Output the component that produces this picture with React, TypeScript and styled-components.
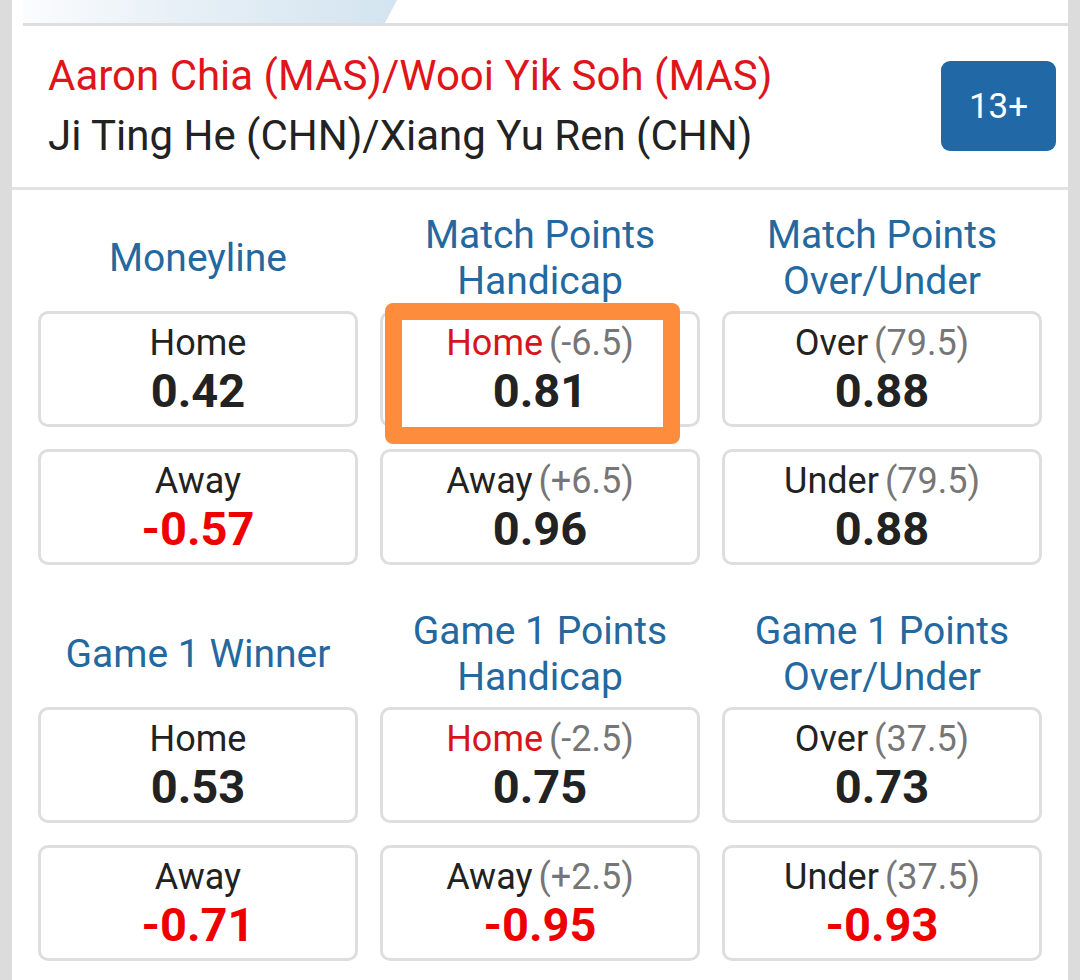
import styled, { createGlobalStyle } from "styled-components";

const GlobalStyle = createGlobalStyle`
  html, body {
    margin: 0;
    padding: 0;
    background: #dcdcdc;
  }
  body {
    font-family: Roboto, "Noto Sans", Arial, sans-serif;
    -webkit-font-smoothing: antialiased;
  }
`;

type Line = {
    label: string;
    line?: string;
    odds: string;
    hot?: boolean;
    marked?: boolean;
};

type Market = {
    title: string[];
    lines: Line[];
};

const sections: Market[][] = [
    [
        {
            title: ["Moneyline"],
            lines: [
                { label: "Home", odds: "0.42" },
                { label: "Away", odds: "-0.57" },
            ],
        },
        {
            title: ["Match Points", "Handicap"],
            lines: [
                { label: "Home", line: "(-6.5)", odds: "0.81", hot: true, marked: true },
                { label: "Away", line: "(+6.5)", odds: "0.96" },
            ],
        },
        {
            title: ["Match Points", "Over/Under"],
            lines: [
                { label: "Over", line: "(79.5)", odds: "0.88" },
                { label: "Under", line: "(79.5)", odds: "0.88" },
            ],
        },
    ],
    [
        {
            title: ["Game 1 Winner"],
            lines: [
                { label: "Home", odds: "0.53" },
                { label: "Away", odds: "-0.71" },
            ],
        },
        {
            title: ["Game 1 Points", "Handicap"],
            lines: [
                { label: "Home", line: "(-2.5)", odds: "0.75", hot: true },
                { label: "Away", line: "(+2.5)", odds: "-0.95" },
            ],
        },
        {
            title: ["Game 1 Points", "Over/Under"],
            lines: [
                { label: "Over", line: "(37.5)", odds: "0.73" },
                { label: "Under", line: "(37.5)", odds: "-0.93" },
            ],
        },
    ],
];

function OddsCard({ item }: { item: Line }) {
    const negative = item.odds.startsWith("-");
    return (
        <Card>
            {item.marked && <Marker />}
            <CardText>
                <Label $hot={item.hot}>
                    {item.label}
                    {item.line && <LineValue>{item.line}</LineValue>}
                </Label>
                <Odds $negative={negative}>{item.odds}</Odds>
            </CardText>
        </Card>
    );
}

function App() {
    return (
        <>
            <GlobalStyle />
            <Page>
                <Strip />
                <Main>
                    <TopBar>
                        <Banner />
                    </TopBar>
                    <MatchHeader>
                        <Teams>
                            <HomeTeam>Aaron Chia (MAS)/Wooi Yik Soh (MAS)</HomeTeam>
                            <AwayTeam>Ji Ting He (CHN)/Xiang Yu Ren (CHN)</AwayTeam>
                        </Teams>
                        <MoreButton>13+</MoreButton>
                    </MatchHeader>
                    {sections.map((markets, i) => (
                        <Section key={i}>
                            {markets.map((m) => (
                                <Column key={m.title.join(" ")}>
                                    <Title>
                                        {m.title.map((t) => (
                                            <span key={t}>{t}</span>
                                        ))}
                                    </Title>
                                    {m.lines.map((l) => (
                                        <OddsCard key={l.label} item={l} />
                                    ))}
                                </Column>
                            ))}
                        </Section>
                    ))}
                </Main>
                <Strip />
            </Page>
        </>
    );
}

const Page = styled.div`
display: flex;
min-height: 100vh;
background: #dcdcdc;
`;

const Strip = styled.div`
width: 12px;
flex: none;
background: #dcdcdc;
`;

const Main = styled.div`
flex: 1;
background: #ffffff;
`;

const TopBar = styled.div`
margin-left: 11px;
height: 23px;
border-bottom: 3px solid #dedede;
`;

const Banner = styled.div`
width: 374px;
height: 100%;
background: linear-gradient(90deg, #fbfcfe 0%, #e6eff6 45%, #d3e4f0 100%);
clip-path: polygon(0 0, 100% 0, calc(100% - 12px) 100%, 0 100%);
`;

const MatchHeader = styled.div`
display: flex;
align-items: center;
justify-content: space-between;
padding: 20px 12px 21px 36px;
border-bottom: 3px solid #e2e2e2;
`;

const Teams = styled.div`
display: flex;
flex-direction: column;
font-size: 42px;
line-height: 60px;
`;

const HomeTeam = styled.div`
color: #e0141b;
`;

const AwayTeam = styled.div`
color: #222222;
`;

const MoreButton = styled.div`
width: 115px;
height: 90px;
display: flex;
align-items: center;
justify-content: center;
border-radius: 9px;
background: #2168a6;
color: #ffffff;
font-size: 35px;
`;

const Section = styled.div`
display: grid;
grid-template-columns: repeat(3, 1fr);
column-gap: 22px;
padding: 22px 26px 21px;
`;

const Column = styled.div`
display: flex;
flex-direction: column;
gap: 22px;
`;

const Title = styled.div`
height: 92px;
margin-bottom: -15px;
display: flex;
flex-direction: column;
align-items: center;
justify-content: center;
color: #23689f;
font-size: 39px;
line-height: 46px;
text-align: center;
`;

const Card = styled.div`
position: relative;
height: 116px;
box-sizing: border-box;
border: 3px solid #dedede;
border-radius: 10px;
display: flex;
align-items: center;
justify-content: center;
`;

const Marker = styled.div`
position: absolute;
left: 2px;
top: -11px;
right: 17px;
bottom: -20px;
border: 17px solid #fd8c3c;
border-radius: 8px;
background: #ffffff;
z-index: 0;
`;

const CardText = styled.div`
position: relative;
z-index: 1;
display: flex;
flex-direction: column;
align-items: center;
`;

const Label = styled.div<{ $hot?: boolean }>`
font-size: 36px;
line-height: 40px;
color: ${(p) => (p.$hot ? "#d7141c" : "#222222")};
`;

const LineValue = styled.span`
margin-left: 6px;
color: #767676;
`;

const Odds = styled.div<{ $negative?: boolean }>`
margin-top: 3px;
font-size: 47px;
line-height: 50px;
font-weight: 700;
color: ${(p) => (p.$negative ? "#ee0000" : "#222222")};
`;

export default App;
